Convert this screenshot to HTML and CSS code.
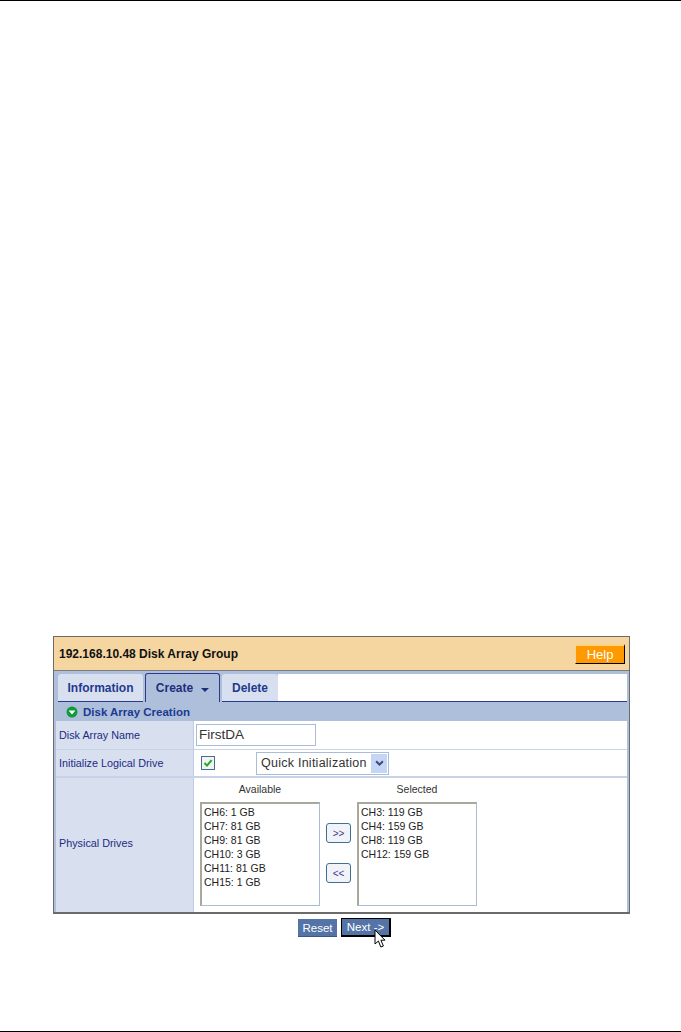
FILE: index.html
```html
<!DOCTYPE html>
<html lang="en">
<head>
  <meta charset="UTF-8">
  <meta name="viewport" content="width=device-width, initial-scale=1.0">
  <title>Disk Array Group</title>
  <link rel="stylesheet" href="styles.css">
</head>
<body>
  <div id="page">
    <div id="figure">
      <div id="panel">
        <div id="header">
          <span id="title">192.168.10.48 Disk Array Group</span>
          <button id="helpButton">Help</button>
        </div>
        <div id="content">
          <div id="tabs">
            <div class="tab">Information</div>
            <div class="tab active">Create
              <svg class="tab-arrow" viewBox="0 0 8 4"><path d="M0 0h8L4 4z"/></svg>
            </div>
            <div class="tab">Delete</div>
            <div id="tabsRest"></div>
          </div>
          <div id="sectionBar">
            <svg class="section-icon" viewBox="0 0 12 12">
              <circle cx="6" cy="6" r="5.5" fill="#0f9a3c"/>
              <path d="M2.6 4.4h6.8L6 8.6z" fill="#fff"/>
            </svg>
            Disk Array Creation
          </div>
          <div class="row name-row">
            <div class="label">Disk Array Name</div>
            <div class="value">
              <div class="text-box">FirstDA</div>
            </div>
          </div>
          <div class="row init-row">
            <div class="label">Initialize Logical Drive</div>
            <div class="value">
              <svg class="check" viewBox="0 0 14 14">
                <rect x="0.5" y="0.5" width="13" height="13" fill="#f4f4ee" stroke="#3f6f96"/>
                <path d="M3.5 7l2.5 2.6 4.6-5.4" fill="none" stroke="#1fa82f" stroke-width="2"/>
              </svg>
              <div class="select-box">
                <span>Quick Initialization</span>
                <div class="select-arrow">
                  <svg viewBox="0 0 8 6"><path d="M1 1l3 3 3-3" fill="none" stroke="#3b4a70" stroke-width="1.8"/></svg>
                </div>
              </div>
            </div>
          </div>
          <div class="row drives-row">
            <div class="label">Physical Drives</div>
            <div class="value drives">
              <div class="drive-col">
                <div class="drive-title">Available</div>
                <div class="list-box">
                  <div>CH6: 1 GB</div>
                  <div>CH7: 81 GB</div>
                  <div>CH9: 81 GB</div>
                  <div>CH10: 3 GB</div>
                  <div>CH11: 81 GB</div>
                  <div>CH15: 1 GB</div>
                </div>
              </div>
              <div class="move-buttons">
                <button class="move">&gt;&gt;</button>
                <button class="move">&lt;&lt;</button>
              </div>
              <div class="drive-col">
                <div class="drive-title">Selected</div>
                <div class="list-box">
                  <div>CH3: 119 GB</div>
                  <div>CH4: 159 GB</div>
                  <div>CH8: 119 GB</div>
                  <div>CH12: 159 GB</div>
                </div>
              </div>
            </div>
          </div>
        </div>
      </div>
      <div id="actions">
        <button class="action">Reset</button>
        <button class="action focused">Next -&gt;</button>
      </div>
      <svg id="cursor" viewBox="0 0 14 19">
        <path d="M1 1v14l3.4-3 2.4 6 2.6-1-2.5-5.8H11z" fill="#fff" stroke="#000"/>
      </svg>
    </div>
  </div>
</body>
</html>
```

FILE: styles.css
```css
html, body {
  margin: 0;
  background: #fff;
}

#page {
  box-sizing: border-box;
  height: 1032px;
  padding-top: 635px;
  border-top: 1px solid #000;
  border-bottom: 1px solid #000;
  font-family: "Liberation Sans", Arial, sans-serif;
}

#figure {
  position: relative;
  margin-left: 53px;
  width: 577px;
}

#panel {
  border: 1px solid #6b6b6b;
  border-bottom-width: 2px;
}

#header {
  display: flex;
  align-items: center;
  justify-content: space-between;
  height: 33px;
  padding: 0 4px 0 5px;
  background: #f5d6a1;
  border-bottom: 1px solid #7c7c7c;
}

#title {
  font-size: 12px;
  font-weight: bold;
  color: #111;
}

#helpButton {
  width: 50px;
  height: 20px;
  padding: 0;
  font-family: inherit;
  font-size: 13px;
  color: #fff;
  background: #ff9900;
  border: 1px solid #000;
  border-top-color: #ffd28a;
  border-left-color: #ffd28a;
  border-top-width: 2px;
}

#content {
  padding: 2px 2px 0;
  background: #aebfdc;
}

#tabs {
  display: flex;
  height: 29px;
  padding-left: 2px;
  align-items: flex-end;
}

.tab {
  display: flex;
  align-items: center;
  justify-content: center;
  box-sizing: border-box;
  width: 85px;
  height: 28px;
  margin-right: 2px;
  font-size: 12px;
  font-weight: bold;
  color: #1f3a8f;
  background: #d8e0f0;
  border-bottom: 1px solid #2b3a8c;
  border-radius: 3px 3px 0 0;
}

.tab:nth-child(3) {
  width: 56px;
  margin-right: 0;
}

.tab.active {
  width: 75px;
  height: 29px;
  background: #aebfdc;
  color: #1c2f7c;
  border: 1px solid #2b3a8c;
  border-bottom: none;
  gap: 8px;
}

.tab-arrow {
  width: 8px;
  height: 4px;
  margin-top: 3px;
  fill: #1c2f7c;
}

#tabsRest {
  flex: 1;
  height: 28px;
  background: #fff;
  border-bottom: 1px solid #2b3a8c;
  box-sizing: border-box;
}

#sectionBar {
  display: flex;
  align-items: center;
  gap: 5px;
  height: 19px;
  padding-left: 10px;
  font-size: 11.5px;
  font-weight: bold;
  color: #1c3a8f;
}

.section-icon {
  width: 12px;
  height: 12px;
}

.row {
  display: flex;
  border-bottom: 1px solid #c7d3e8;
}

.name-row {
  height: 28px;
}

.init-row {
  height: 26px;
  border-bottom-width: 2px;
}

.drives-row {
  height: 134px;
  border-bottom: none;
}

.label {
  display: flex;
  align-items: center;
  box-sizing: border-box;
  width: 138px;
  padding-left: 3px;
  font-size: 10.8px;
  color: #1c2a80;
  background: #d8e0f0;
  border-right: 1px solid #bccbe3;
}

.drives-row .label {
  padding-bottom: 4px;
}

.value {
  flex: 1;
  display: flex;
  align-items: center;
  padding-left: 2px;
  background: #fff;
}

.text-box {
  box-sizing: border-box;
  width: 120px;
  height: 22px;
  padding-left: 2px;
  font-size: 13.5px;
  line-height: 20px;
  color: #333;
  border: 1px solid #a9bcd8;
}

.check {
  width: 14px;
  height: 14px;
  margin: 0 41px 0 5px;
}

.select-box {
  display: flex;
  align-items: center;
  justify-content: space-between;
  box-sizing: border-box;
  width: 133px;
  height: 23px;
  padding: 0 1px 0 4px;
  font-size: 12.5px;
  letter-spacing: 0.25px;
  color: #333;
  border: 1px solid #a9bcd8;
}

.select-arrow {
  display: flex;
  align-items: center;
  justify-content: center;
  width: 16px;
  height: 19px;
  background: #c5d5f5;
}

.select-arrow svg {
  width: 9px;
  height: 7px;
}

.drives {
  align-items: flex-start;
  padding-left: 6px;
}

.drive-col {
  width: 120px;
}

.drive-title {
  height: 24px;
  font-size: 10.5px;
  line-height: 23px;
  text-align: center;
  color: #333;
}

.list-box {
  box-sizing: border-box;
  height: 104px;
  padding: 1px 2px 0;
  font-size: 10.5px;
  line-height: 14px;
  color: #222;
  border: 1px solid #a9bcd8;
  border-top: 2px solid #a8a89c;
  border-left: 2px solid #a8a89c;
}

.move-buttons {
  display: flex;
  flex-direction: column;
  gap: 20px;
  width: 37px;
  padding: 45px 0 0 6px;
  box-sizing: border-box;
}

.move {
  width: 25px;
  height: 20px;
  padding: 0;
  font-family: inherit;
  font-size: 10px;
  color: #3a3a9a;
  background: #f1f3f6;
  border: 1px solid #3f6f96;
  border-radius: 3px;
}

#actions {
  display: flex;
  align-items: flex-end;
  justify-content: center;
  gap: 4px;
  height: 23px;
  padding-left: 6px;
}

.action {
  width: 39px;
  height: 18px;
  padding: 0;
  font-family: inherit;
  font-size: 11.5px;
  color: #fff;
  background: #5473a6;
  border: none;
  border-bottom: 1px solid #3c5680;
}

.action.focused {
  width: 50px;
  height: 19px;
  border: 1px solid #000;
  border-right-width: 2px;
  border-bottom-width: 2px;
}

#cursor {
  position: absolute;
  left: 321px;
  top: 293px;
  width: 14px;
  height: 19px;
}
```
